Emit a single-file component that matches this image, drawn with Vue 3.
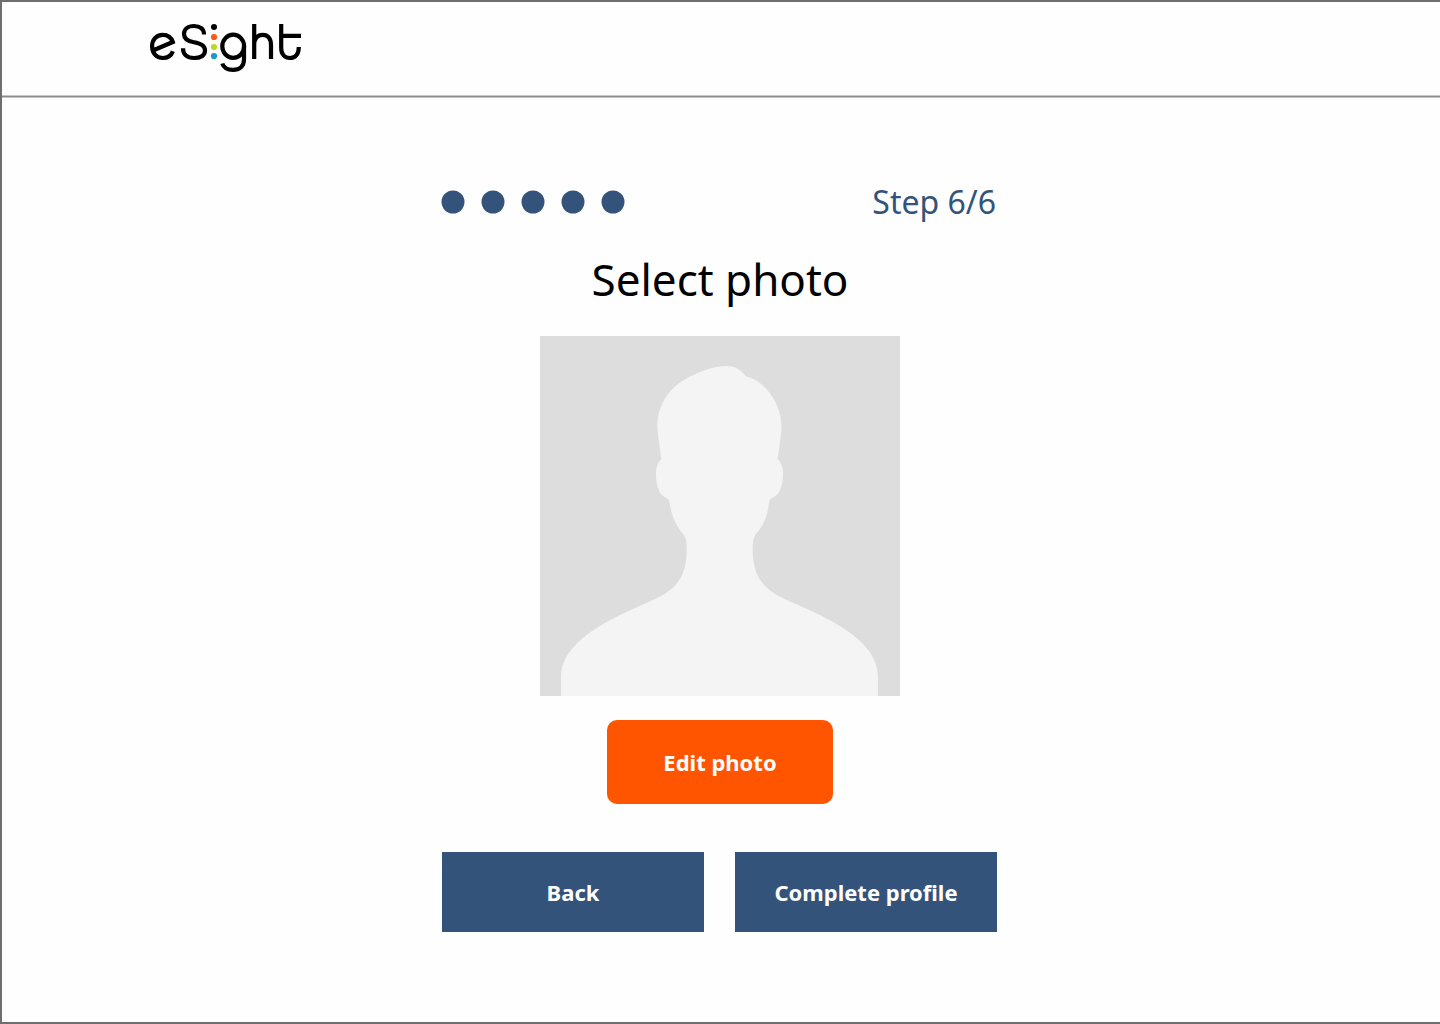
<script setup>
const steps = 5
</script>

<template>
  <div class="page">
    <header class="header">
      <a class="brand" href="#" aria-label="eSight">
        <svg class="logo" viewBox="150 22 152 52" aria-hidden="true">
          <g fill="none" stroke="#000" stroke-width="4.2">
            <path d="M172.9 51.2C171.3 55.5 167.5 58 162.7 58C156.300 58 152.100 53 152.100 46.300S156.300 34.800 162.700 34.800C167.500 34.800 171.200 37.200 172.800 42L153.500 50.300" />
            <path d="M204 34.600C204 29 200 26 194 26C187.500 26 184 29.500 184 34C184 39 188 41.300 194 42.300C201 43.400 205 45.500 205 50.500C205 55.500 200.500 58 194 58C187 58 183 54.500 183 48.300" />
            <ellipse cx="233.200" cy="46.300" rx="10.900" ry="11.600" />
            <path d="M244 46V59.500C244 66.300 239.500 69.900 233 69.900C227.500 69.900 223.700 68 222.300 63.500" />
            <path d="M254.200 24V59M254.200 45C254.200 38.500 257.500 34.800 262.700 34.800C268 34.800 271 38.500 271 45V59" />
            <path d="M281.200 24V48C281.200 54.500 285 58 290 58S298.800 54.500 298.800 47M281.200 35.800H301" />
          </g>
          <circle cx="214" cy="27" r="3" fill="#000" />
          <circle cx="214" cy="37" r="3.100" fill="#ff5a10" />
          <circle cx="214" cy="47" r="3.100" fill="#bcd62c" />
          <circle cx="214" cy="56" r="3.100" fill="#1b98c4" />
        </svg>
      </a>
    </header>

    <main class="content">
      <div class="progress">
        <div class="dots">
          <svg v-for="n in steps" :key="n" class="dot" viewBox="0 0 24 24" aria-hidden="true">
            <circle cx="12" cy="12" r="11.500" />
          </svg>
        </div>
        <p class="step">Step 6/6</p>
      </div>

      <h1 class="title">Select photo</h1>

      <svg class="photo" viewBox="540 336 360 360" role="img" aria-label="Profile photo placeholder">
        <rect x="540" y="336" width="360" height="360" fill="#ddd" />
        <path
          fill="#f4f4f4"
          d="M726.700 366C735 366 741.500 370 745.700 376.300C766 381 781.500 404 781.500 427C781 438 778.700 450 777.700 459.300C781.500 462.500 783 468 783 474.300C783 484 780 494.500 774 496.700C770.500 498.500 769.300 499.500 769 503.300C767 517 764 525 755.500 534.500C753 539 752.700 543 752.700 550C752.700 588 775 595 805 608C850 628 878 649 878 677V696H561V677C561 649 590 628 635 608C665 595 686.700 588 686.700 550C686.700 543 686.500 539 683.500 534.500C675.500 525 672 517 669.700 503.300C669.300 499.500 667.500 498.500 664.500 497C658.500 494 656 484 656 474.300C656 468 657.500 462.500 661.300 459.300C660 447 658 438 657.300 427C657.300 407 667 390 684 380C697 372 714 366 726.700 366Z"
        />
      </svg>

      <button class="edit" type="button">Edit photo</button>

      <div class="actions">
        <button class="nav" type="button">Back</button>
        <button class="nav" type="button">Complete profile</button>
      </div>
    </main>
  </div>
</template>

<style>
body {
  margin: 0;
  background: #fefefe;
}
</style>

<style scoped>
.page {
  box-sizing: border-box;
  min-height: 100vh;
  box-shadow: inset 2px 2px #6f6e6f, inset 0 -2px #6f6e6f;
  font-family: "Noto Sans", "Open Sans", sans-serif;
  color: #000;
}

.header {
  box-sizing: border-box;
  height: 98px;
  margin-left: 2px;
  padding: 22px 148px 0;
  background: linear-gradient(#c6c6c6 1px, #8c8c8c 1px 2px, #c6c6c6 2px) bottom / 100% 3px no-repeat;
}

.brand {
  display: inline-block;
}

.logo {
  display: block;
  width: 152px;
  height: 52px;
}

.content {
  display: flex;
  flex-direction: column;
  align-items: center;
  width: 556px;
  max-width: 100%;
  margin: 0 auto;
  padding: 80px 0 92px;
}

.progress {
  display: flex;
  justify-content: space-between;
  align-items: center;
  width: 100%;
  height: 48px;
}

.dots {
  display: flex;
  gap: 16px;
  margin-left: -1px;
}

.dot {
  width: 24px;
  height: 24px;
  fill: #33537b;
}

.step {
  margin: 0;
  padding-right: 2px;
  font-size: 32px;
  line-height: 48px;
  color: #33537b;
}

.title {
  margin: 24px 0 28px;
  font-size: 44px;
  font-weight: 400;
  line-height: 58px;
}

.photo {
  width: 360px;
  height: 360px;
}

button {
  border: 0;
  padding: 0;
  font-family: inherit;
  font-size: 22px;
  font-weight: 700;
  line-height: 30px;
  color: #fff;
  cursor: pointer;
}

.edit {
  width: 226px;
  height: 84px;
  margin: 24px 0 48px;
  border-radius: 10px;
  background: #ff5500;
}

.actions {
  display: flex;
  gap: 31px;
  width: 100%;
}

.nav {
  width: 262px;
  height: 80px;
  background: #33537b;
}
</style>
